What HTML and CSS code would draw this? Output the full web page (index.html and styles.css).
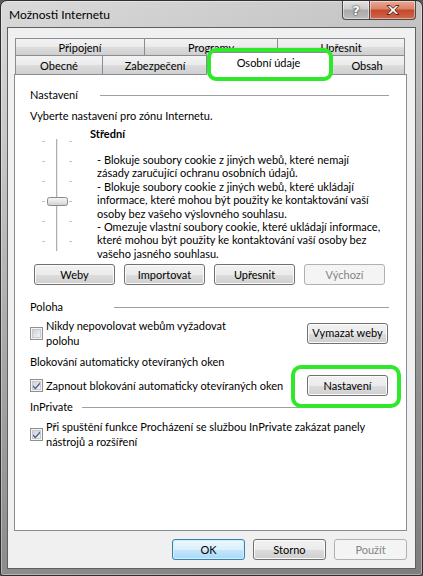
FILE: index.html
```html
<!DOCTYPE html>
<html lang="cs">
<head>
<meta charset="utf-8">
<title>Možnosti Internetu</title>
<link rel="stylesheet" href="styles.css">
</head>
<body>
<div class="window">
  <div class="titlebar">
    <span class="title">Možnosti Internetu</span>
    <div class="caption-btns">
      <div class="cbtn help">?</div>
      <div class="cbtn close">
        <svg width="16" height="12" viewBox="0 0 16 12"><path d="M2 1.5 L5 1.5 L8 4.3 L11 1.5 L14 1.5 L9.8 6 L14 10.5 L11 10.5 L8 7.7 L5 10.5 L2 10.5 L6.2 6 Z" fill="#fff" stroke="#5a2a1e" stroke-width="1" stroke-linejoin="round"/></svg>
      </div>
    </div>
  </div>
  <div class="client">
    <div class="tabs">
      <div class="tabrow back">
        <div class="tab t-pripojeni">Připojení</div>
        <div class="tab t-programy">Programy</div>
        <div class="tab t-upresnit">Upřesnit</div>
      </div>
      <div class="tabrow front">
        <div class="tab t-obecne">Obecné</div>
        <div class="tab t-zab">Zabezpečení</div>
        <div class="tab t-osob selected">Osobní údaje</div>
        <div class="tab t-obsah">Obsah</div>
      </div>
    </div>
    <div class="panel">
      <div class="gh gh-nast"><span class="gh-label">Nastavení</span></div>
      <div class="line-vyberte">Vyberte nastavení pro zónu Internetu.</div>
      <div class="settings">
        <svg class="slider" width="60" height="135" viewBox="0 0 60 135">
          <g fill="#c4c4c4">
            <rect x="12" y="14" width="3" height="1"/><rect x="39" y="14" width="3" height="1"/>
            <rect x="12" y="34" width="3" height="1"/><rect x="39" y="34" width="3" height="1"/>
            <rect x="12" y="54" width="3" height="1"/><rect x="39" y="54" width="3" height="1"/>
            <rect x="12" y="74" width="3" height="1"/><rect x="39" y="74" width="3" height="1"/>
            <rect x="12" y="94" width="3" height="1"/><rect x="39" y="94" width="3" height="1"/>
            <rect x="12" y="114" width="3" height="1"/><rect x="39" y="114" width="3" height="1"/>
          </g>
          <rect x="26" y="12" width="1" height="112" fill="#b0b0b0"/>
          <rect x="27" y="12" width="1" height="112" fill="#e8e8e8"/>
          <defs>
            <linearGradient id="thumb" x1="0" y1="0" x2="0" y2="1">
              <stop offset="0" stop-color="#f7f7f7"/>
              <stop offset="0.5" stop-color="#e6e6e6"/>
              <stop offset="1" stop-color="#cfcfcf"/>
            </linearGradient>
          </defs>
          <rect x="17.5" y="70.5" width="20" height="8" rx="2" fill="url(#thumb)" stroke="#8a8a8a"/>
        </svg>
        <div class="settings-text">
          <div class="level">Střední</div>
          <div class="desc">- Blokuje soubory cookie z jiných webů, které nemají<br>zásady zaručující ochranu osobních údajů.<br>- Blokuje soubory cookie z jiných webů, které ukládají<br>informace, které mohou být použity ke kontaktování vaší<br>osoby bez vašeho výslovného souhlasu.<br>- Omezuje vlastní soubory cookie, které ukládají informace,<br>které mohou být použity ke kontaktování vaší osoby bez<br>vašeho jasného souhlasu.</div>
        </div>
      </div>
      <div class="btnrow">
        <div class="btn w81">Weby</div>
        <div class="btn w81">Importovat</div>
        <div class="btn w81">Upřesnit</div>
        <div class="btn w81 disabled">Výchozí</div>
      </div>

      <div class="gh gh-poloha"><span class="gh-label">Poloha</span></div>
      <div class="cbrow cbrow-poloha">
        <div class="cb">
          <span class="box"><svg width="13" height="13" viewBox="0 0 13 13"><rect x="0.5" y="0.5" width="12" height="12" fill="#f4f4f4" stroke="#8e8f8f"/><rect x="2.5" y="2.5" width="8" height="8" fill="url(#cbg)" stroke="#c7c9cc"/><defs><linearGradient id="cbg" x1="0" y1="0" x2="1" y2="1"><stop offset="0" stop-color="#cbcfd5"/><stop offset="1" stop-color="#f6f6f6"/></linearGradient></defs></svg></span>
          <span class="cb-label">Nikdy nepovolovat webům vyžadovat<br>polohu</span>
        </div>
        <div class="btn w81">Vymazat weby</div>
      </div>

      <div class="gh-plain">Blokování automaticky otevíraných oken</div>
      <div class="cbrow cbrow-popup">
        <div class="cb">
          <span class="box"><svg width="13" height="13" viewBox="0 0 13 13"><rect x="0.5" y="0.5" width="12" height="12" fill="#f4f4f4" stroke="#8e8f8f"/><rect x="2.5" y="2.5" width="8" height="8" fill="url(#cbg2)" stroke="#c7c9cc"/><defs><linearGradient id="cbg2" x1="0" y1="0" x2="1" y2="1"><stop offset="0" stop-color="#cbcfd5"/><stop offset="1" stop-color="#f6f6f6"/></linearGradient></defs><path d="M3 6.2 L5.3 8.6 L10 3.2 L10 5.2 L5.3 10.4 L3 8 Z" fill="#4a5f8a"/></svg></span>
          <span class="cb-label">Zapnout blokování automaticky otevíraných oken</span>
        </div>
        <div class="btn w81">Nastavení</div>
      </div>

      <div class="gh gh-inpriv"><span class="gh-label">InPrivate</span></div>
      <div class="cbrow cbrow-inpriv">
        <div class="cb">
          <span class="box"><svg width="13" height="13" viewBox="0 0 13 13"><rect x="0.5" y="0.5" width="12" height="12" fill="#f4f4f4" stroke="#8e8f8f"/><rect x="2.5" y="2.5" width="8" height="8" fill="url(#cbg3)" stroke="#c7c9cc"/><defs><linearGradient id="cbg3" x1="0" y1="0" x2="1" y2="1"><stop offset="0" stop-color="#cbcfd5"/><stop offset="1" stop-color="#f6f6f6"/></linearGradient></defs><path d="M3 6.2 L5.3 8.6 L10 3.2 L10 5.2 L5.3 10.4 L3 8 Z" fill="#4a5f8a"/></svg></span>
          <span class="cb-label">Při spuštění funkce Procházení se službou InPrivate zakázat panely<br>nástrojů a rozšíření</span>
        </div>
      </div>
    </div>
    <div class="footer">
      <div class="btn w73 default">OK</div>
      <div class="btn w73">Storno</div>
      <div class="btn w73 disabled">Použít</div>
    </div>
  </div>
  <div class="hl hl-tab"></div>
  <div class="hl hl-btn"></div>
</div>
</body>
</html>
```
FILE: styles.css
```css
* { box-sizing: border-box; }
html, body { margin: 0; padding: 0; }
body {
  width: 423px;
  height: 576px;
  overflow: hidden;
  background: #5a5a5a;
  font-family: Lato, "Open Sans", "Noto Sans", sans-serif;
  font-size: 11px;
  color: #000;
}
.window {
  position: relative;
  width: 423px;
  height: 576px;
  display: flex;
  flex-direction: column;
  padding: 0 6px 6px 6px;
  border: 1px solid #2f2f2f;
  border-radius: 7px 7px 3px 3px;
  background: linear-gradient(160deg, #dadada 0%, #c2c2c2 25%, #a6a6a6 50%, #8f8f8f 75%, #7e7e7e 100%);
  box-shadow: inset 0 0 0 1px rgba(255,255,255,0.35);
}
.titlebar {
  height: 26px;
  display: flex;
  align-items: flex-start;
  justify-content: space-between;
}
.title {
  margin: 6px 0 0 2px;
  font-size: 12px;
  line-height: 16px;
  color: #000;
}
.caption-btns {
  display: flex;
}
.cbtn {
  height: 19px;
  border: 1px solid #4a4a4a;
  border-top: none;
  display: flex;
  align-items: center;
  justify-content: center;
  box-shadow: inset 0 0 0 1px rgba(255,255,255,0.45);
}
.help {
  width: 27px;
  border-radius: 0 0 0 4px;
  border-right: none;
  background: linear-gradient(#e2e2e2 0%, #cbcbcb 45%, #a9a9a9 50%, #bdbdbd 100%);
  color: #fff;
  font-family: "DejaVu Sans", sans-serif;
  font-weight: bold;
  font-size: 13px;
  text-shadow: 0 0 2px #333, 0 0 1px #333;
}
.close {
  width: 47px;
  border-radius: 0 0 4px 0;
  background: linear-gradient(#e9a996 0%, #d98166 45%, #c3472a 50%, #d2674a 100%);
}
.client {
  flex: 1;
  display: flex;
  flex-direction: column;
  background: #f0f0f0;
  border: 1px solid #5f5f5f;
  padding-top: 10px;
}
.tabs {
  display: flex;
  flex-direction: column;
  margin-left: 7px;
}
.tabrow { display: flex; }
.tab {
  border: 1px solid #898c95;
  border-bottom: none;
  background: linear-gradient(#f3f3f3 0%, #ebebeb 50%, #dddddd 51%, #cfcfcf 100%);
  display: flex;
  align-items: center;
  justify-content: center;
  line-height: 13px;
}
.back .tab { height: 17px; padding-top: 1px; }
.front .tab { height: 19px; }
.t-pripojeni { width: 130px; }
.t-programy { width: 134px; margin-left: -1px; }
.t-upresnit { width: 128px; margin-left: -1px; }
.t-obecne { width: 88px; }
.t-zab { width: 106px; margin-left: -1px; }
.t-osob { width: 125px; }
.t-obsah { width: 76px; }
.tab.selected {
  position: relative;
  z-index: 2;
  background: #fff;
  height: 23px;
  margin: -3px -2px -1px -2px;
  padding-bottom: 3px;
}
.panel {
  flex: 1;
  margin: 0 8px 0 6px;
  background: #fff;
  border: 1px solid #898c95;
  padding: 0 17px 0 15px;
  display: flex;
  flex-direction: column;
  line-height: 14px;
}
.gh {
  display: flex;
  align-items: center;
  height: 14px;
}
.gh::after {
  content: "";
  flex: 1;
  border-top: 1px solid #a0a0a0;
}
.gh-label { flex: none; }
.gh-nast { margin-top: 13px; }
.gh-nast .gh-label { width: 70px; }
.gh-poloha { margin-top: 15px; }
.gh-poloha .gh-label { width: 84px; }
.gh-inpriv { margin-top: 4px; }
.gh-inpriv .gh-label { width: 52px; }
.line-vyberte { margin-top: 7px; }
.settings {
  display: flex;
  margin-top: 4px;
}
.slider { flex: none; display: block; }
.settings-text { display: flex; flex-direction: column; }
.level { font-weight: bold; line-height: 14px; }
.desc {
  margin: 12px 0 0 7px;
  line-height: 13.4px;
  white-space: nowrap;
}
.btnrow {
  display: flex;
  gap: 9px;
  margin: 2px 0 0 4px;
}
.btn {
  height: 21px;
  border: 1px solid #707070;
  border-radius: 3px;
  background: linear-gradient(#f2f2f2 0%, #ebebeb 50%, #dddddd 51%, #cfcfcf 100%);
  box-shadow: inset 0 0 0 1px #fbfbfb;
  display: flex;
  align-items: center;
  justify-content: center;
  line-height: 14px;
  flex: none;
}
.w81 { width: 81px; }
.w73 { width: 73px; }
.btn.disabled {
  border-color: #adb2b5;
  background: #f4f4f4;
  box-shadow: none;
  color: #838383;
}
.btn.default {
  border-color: #3c7fb1;
  background: linear-gradient(#ecf7fd 0%, #dbf0fc 50%, #c5e7fc 51%, #a9d9f6 100%);
  box-shadow: inset 0 0 0 1px #cdeffb;
}
.cbrow {
  display: flex;
  align-items: center;
  justify-content: space-between;
}
.cb {
  display: flex;
  align-items: center;
}
.box { display: flex; flex: none; width: 16px; }
.box svg { display: block; }
.cb-label { line-height: 15px; white-space: nowrap; }
.cbrow-poloha { margin-top: 4px; }
.cbrow-poloha .btn { margin-right: 1px; }
.gh-plain { margin-top: 7px; }
.cbrow-popup { margin-top: 6px; }
.cbrow-popup .btn { margin-right: 1px; }
.cbrow-inpriv { margin-top: 5px; }
.footer {
  height: 37px;
  display: flex;
  justify-content: flex-end;
  align-items: center;
  gap: 8px;
  padding-right: 8px;
}
.hl {
  position: absolute;
  border: 4px solid #2fe82a;
  z-index: 5;
}
.hl-tab {
  left: 206px;
  top: 47px;
  width: 126px;
  height: 33px;
  border-radius: 9px;
}
.hl-btn {
  left: 290px;
  top: 364px;
  width: 110px;
  height: 43px;
  border-radius: 10px;
}
```
